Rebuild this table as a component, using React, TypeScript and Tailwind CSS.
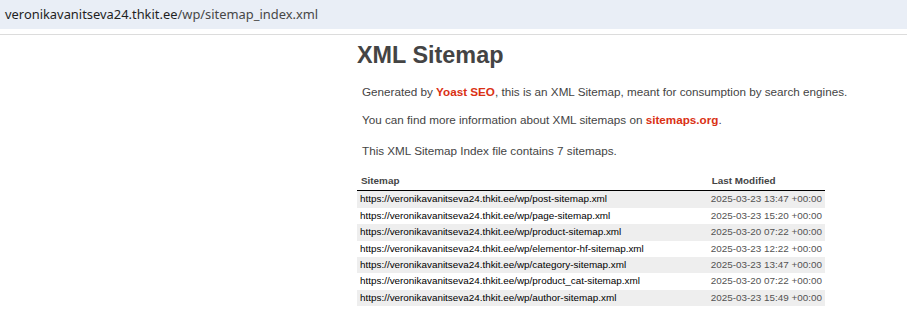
const rows = [
  { loc: 'https://veronikavanitseva24.thkit.ee/wp/post-sitemap.xml', mod: '2025-03-23 13:47 +00:00' },
  { loc: 'https://veronikavanitseva24.thkit.ee/wp/page-sitemap.xml', mod: '2025-03-23 15:20 +00:00' },
  { loc: 'https://veronikavanitseva24.thkit.ee/wp/product-sitemap.xml', mod: '2025-03-20 07:22 +00:00' },
  { loc: 'https://veronikavanitseva24.thkit.ee/wp/elementor-hf-sitemap.xml', mod: '2025-03-23 12:22 +00:00' },
  { loc: 'https://veronikavanitseva24.thkit.ee/wp/category-sitemap.xml', mod: '2025-03-23 13:47 +00:00' },
  { loc: 'https://veronikavanitseva24.thkit.ee/wp/product_cat-sitemap.xml', mod: '2025-03-20 07:22 +00:00' },
  { loc: 'https://veronikavanitseva24.thkit.ee/wp/author-sitemap.xml', mod: '2025-03-23 15:49 +00:00' },
];

export default function App() {
  return (
    <div className="w-[907px] h-[331px] overflow-hidden bg-white font-['Liberation_Sans',Arial,sans-serif]">
      {/* Address bar */}
      <div className="h-[29px] bg-[#e9eef6] flex items-center pl-[5px] font-['Noto_Sans',sans-serif] text-[12.9px]">
        <span className="text-[#1f1f1f]">veronikavanitseva24.thkit.ee</span>
        <span className="text-[#474747]">/wp/sitemap_index.xml</span>
      </div>
      <div className="h-[5px]" />
      <div className="h-px bg-[#dcdcdc]" />

      {/* Page */}
      <div className="pl-[357px] w-[825px] box-content">
        <h1 className="mt-[6px] text-[23.4px] font-bold text-[#444] leading-[28px]">XML Sitemap</h1>
        <div className="pl-[5px] text-[11.7px] text-[#444] leading-[14px]">
          <p className="mt-[16px]">
            Generated by <a className="text-[#da3114] font-bold">Yoast SEO</a>, this is an XML Sitemap, meant for consumption by search engines.
          </p>
          <p className="mt-[14.4px]">
            You can find more information about XML sitemaps on <a className="text-[#da3114] font-bold">sitemaps.org</a>.
          </p>
          <p className="mt-[17px]">This XML Sitemap Index file contains 7 sitemaps.</p>
        </div>

        <table className="mt-[15.6px] w-[468px] border-collapse text-[9.9px] whitespace-nowrap">
          <thead>
            <tr>
              <th className="text-left font-bold text-[#444] pl-[4px] pr-[3px] pt-[1px] pb-[3px] leading-[12.4px] border-b border-black">Sitemap</th>
              <th className="text-left font-bold text-[#444] pl-[4px] pr-[3px] pt-[1px] pb-[3px] leading-[12.4px] border-b border-black w-[117px]">Last Modified</th>
            </tr>
          </thead>
          <tbody>
            {rows.map((r, i) => (
              <tr key={r.loc} className={i % 2 === 0 ? 'bg-[#eee]' : ''}>
                <td className="px-[3px] py-[2px] leading-[12.4px] text-black">{r.loc}</td>
                <td className="px-[3px] py-[2px] leading-[12.4px] text-[#545353]">{r.mod}</td>
              </tr>
            ))}
          </tbody>
        </table>
      </div>
    </div>
  );
}
